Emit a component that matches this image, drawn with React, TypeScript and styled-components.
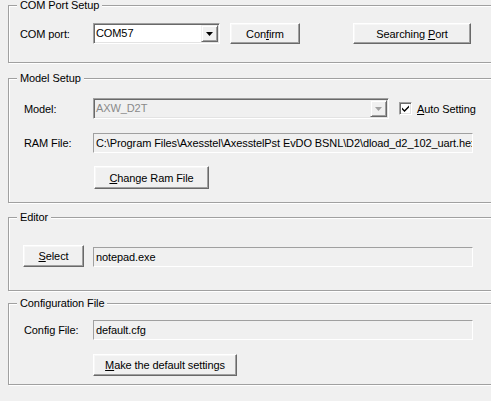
import React from "react";
import styled, { createGlobalStyle } from "styled-components";

const GlobalStyle = createGlobalStyle`
  html, body {
    margin: 0;
    padding: 0;
    background: #f0f0f0;
    overflow: hidden;
  }
  body {
    font-family: "Liberation Sans", Arial, sans-serif;
    font-size: 11px;
    letter-spacing: -0.1px;
    color: #000;
  }
`;

const Page = styled.div`
  width: 491px;
  height: 401px;
  overflow: hidden;
  padding: 5px 0 0 8px;
  box-sizing: border-box;
`;

const Group = styled.section<{ $height: number; $top?: number }>`
  position: relative;
  width: 500px;
  height: ${({ $height }) => $height}px;
  margin-top: ${({ $top }) => $top ?? 0}px;
  box-sizing: border-box;
  border: 1px solid #a0a0a0;
  box-shadow: inset 1px 1px 0 #fff, 1px 1px 0 #fff;
`;

const GroupTitle = styled.span`
  position: absolute;
  top: -7px;
  left: 8px;
  padding: 0 3px;
  line-height: 13px;
  background: #f0f0f0;
  white-space: nowrap;
`;

const GroupBody = styled.div<{ $pt: number; $pl: number }>`
  display: flex;
  flex-direction: column;
  padding: ${({ $pt, $pl }) => `${$pt}px 0 0 ${$pl}px`};
`;

const Row = styled.div<{ $mt?: number; $align?: string }>`
  display: flex;
  align-items: ${({ $align }) => $align ?? "center"};
  margin-top: ${({ $mt }) => $mt ?? 0}px;
`;

const Label = styled.span<{ $w: number }>`
  width: ${({ $w }) => $w}px;
  flex-shrink: 0;
  white-space: nowrap;
`;

const Combo = styled.div<{ $w: number; $disabled?: boolean }>`
  display: flex;
  align-items: stretch;
  width: ${({ $w }) => $w}px;
  height: 21px;
  box-sizing: border-box;
  border: 1px solid;
  border-color: #a0a0a0 #fff #fff #a0a0a0;
  box-shadow: inset 1px 1px 0 #696969, inset -1px -1px 0 #e3e3e3;
  background: ${({ $disabled }) => ($disabled ? "#f0f0f0" : "#fff")};
  color: ${({ $disabled }) => ($disabled ? "#8a8a8a" : "#000")};
  padding: 1px;
`;

const ComboText = styled.span`
  flex: 1;
  padding-left: 1px;
  line-height: 17px;
  white-space: nowrap;
  overflow: hidden;
`;

const ComboArrow = styled.span`
  width: 17px;
  display: flex;
  align-items: center;
  justify-content: center;
  box-sizing: border-box;
  background: #f0f0f0;
  border: 1px solid;
  border-color: #f0f0f0 #696969 #696969 #f0f0f0;
  box-shadow: inset 1px 1px 0 #fff, inset -1px -1px 0 #a0a0a0;
`;

const Button = styled.button<{ $w: number; $h?: number; $ml?: number }>`
  width: ${({ $w }) => $w}px;
  height: ${({ $h }) => $h ?? 23}px;
  margin: 0 0 0 ${({ $ml }) => $ml ?? 0}px;
  padding: 0;
  flex-shrink: 0;
  box-sizing: border-box;
  font: inherit;
  letter-spacing: inherit;
  color: #000;
  background: #f0f0f0;
  border: 1px solid;
  border-color: #fff #696969 #696969 #fff;
  box-shadow: inset -1px -1px 0 #a0a0a0, inset 1px 1px 0 #f7f7f7;
  cursor: default;
`;

const Field = styled.div<{ $w: number; $ml?: number; $mt?: number }>`
  width: ${({ $w }) => $w}px;
  height: 20px;
  margin-left: ${({ $ml }) => $ml ?? 0}px;
  margin-top: ${({ $mt }) => $mt ?? 0}px;
  flex-shrink: 0;
  box-sizing: border-box;
  border: 1px solid;
  border-color: #a0a0a0 #fff #fff #a0a0a0;
  background: #f0f0f0;
  padding-left: 2px;
  line-height: 18px;
  white-space: nowrap;
  overflow: hidden;
`;

const CheckBox = styled.span`
  width: 13px;
  height: 13px;
  margin-left: 10px;
  box-sizing: border-box;
  border: 1px solid;
  border-color: #a0a0a0 #fff #fff #a0a0a0;
  box-shadow: inset 1px 1px 0 #696969, inset -1px -1px 0 #e3e3e3;
  background: #fff;
  display: flex;
  align-items: center;
  justify-content: center;
`;

const CheckText = styled.span`
  margin-left: 5px;
  white-space: nowrap;
`;

const Arrow = ({ color }: { color: string }) => (
  <svg width="7" height="4" viewBox="0 0 7 4">
    <path d="M0 0H7L3.5 4Z" fill={color} />
  </svg>
);

const App = () => (
  <>
    <GlobalStyle />
    <Page>
      <Group $height={58}>
        <GroupTitle>COM Port Setup</GroupTitle>
        <GroupBody $pt={17} $pl={11}>
          <Row>
            <Label $w={73}>COM port:</Label>
            <Combo $w={127}>
              <ComboText>COM57</ComboText>
              <ComboArrow>
                <Arrow color="#000" />
              </ComboArrow>
            </Combo>
            <Button $w={70} $h={21} $ml={10}>
              Con<u>f</u>irm
            </Button>
            <Button $w={118} $h={21} $ml={53}>
              Searching <u>P</u>ort
            </Button>
          </Row>
        </GroupBody>
      </Group>

      <Group $height={125} $top={15}>
        <GroupTitle>Model Setup</GroupTitle>
        <GroupBody $pt={19} $pl={15}>
          <Row>
            <Label $w={69}>Model:</Label>
            <Combo $w={296} $disabled>
              <ComboText>AXW_D2T</ComboText>
              <ComboArrow>
                <Arrow color="#a0a0a0" />
              </ComboArrow>
            </Combo>
            <CheckBox>
              <svg width="9" height="9" viewBox="0 0 9 9">
                <path d="M1 3.5L3.5 6L8 1.5V3.5L3.5 8L1 5.5Z" fill="#000" />
              </svg>
            </CheckBox>
            <CheckText>
              <u>A</u>uto Setting
            </CheckText>
          </Row>
          <Row $mt={14}>
            <Label $w={69}>RAM File:</Label>
            <Field $w={380}>
              C:\Program Files\Axesstel\AxesstelPst EvDO BSNL\D2\dload_d2_102_uart.hex
            </Field>
          </Row>
          <Row $mt={13}>
            <Button $w={115} $ml={70}>
              <u>C</u>hange Ram File
            </Button>
          </Row>
        </GroupBody>
      </Group>

      <Group $height={74} $top={14}>
        <GroupTitle>Editor</GroupTitle>
        <GroupBody $pt={27} $pl={14}>
          <Row $align="flex-start">
            <Button $w={61} $h={22}>
              <u>S</u>elect
            </Button>
            <Field $w={380} $ml={9} $mt={2}>
              notepad.exe
            </Field>
          </Row>
        </GroupBody>
      </Group>

      <Group $height={82} $top={12}>
        <GroupTitle>Configuration File</GroupTitle>
        <GroupBody $pt={16} $pl={15}>
          <Row>
            <Label $w={69}>Config File:</Label>
            <Field $w={380}>default.cfg</Field>
          </Row>
          <Row $mt={14}>
            <Button $w={144} $h={22} $ml={69}>
              <u>M</u>ake the default settings
            </Button>
          </Row>
        </GroupBody>
      </Group>
    </Page>
  </>
);

export default App;
